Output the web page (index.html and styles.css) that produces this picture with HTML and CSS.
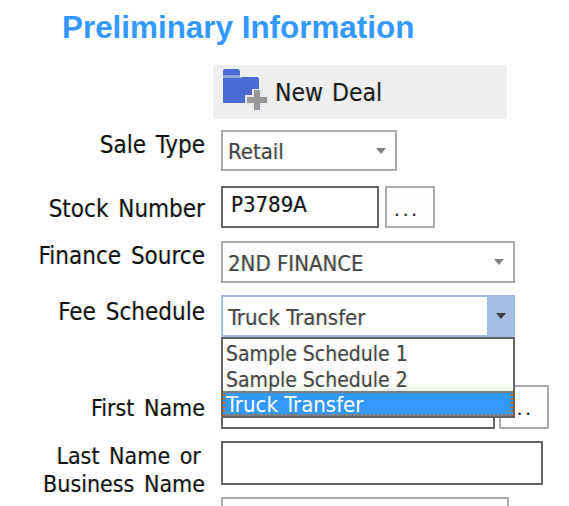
FILE: index.html
```html
<!DOCTYPE html>
<html lang="en">

<head>
    <meta charset="UTF-8">
    <title>Preliminary Information</title>
    <link rel="stylesheet" href="styles.css">
</head>

<body>
    <h1 class="title">Preliminary Information</h1>

    <div class="new-deal">
        <svg class="new-deal-icon" width="46" height="44" viewBox="0 0 46 44">
            <path d="M0 2 Q0 0 2 0 L14 0 Q17 0 17 3 L17 6 L0 6 Z" fill="#4a6bcf"/>
            <rect x="0" y="6" width="17" height="3" fill="#8ea3e0"/>
            <path d="M0 9 L17 9 L19 8 L34 8 Q36 8 36 10 L36 34 L0 34 Z" fill="#4a6bcf"/>
            <path d="M29 20 L39 20 L39 26 L46 26 L46 36 L39 36 L39 43 L29 43 L29 36 L22 36 L22 26 L29 26 Z" fill="#e6e7ec"/>
            <path d="M31 21 L37 21 L37 28 L44 28 L44 34 L37 34 L37 41 L31 41 L31 34 L24 34 L24 28 L31 28 Z" fill="#999999"/>
        </svg>
        <span>New Deal</span>
    </div>

    <div class="row row-sale">
        <label class="label">Sale Type</label>
        <div class="select select-sale">
            <span class="select-text">Retail</span>
            <span class="select-btn"><i class="arrow"></i></span>
        </div>
    </div>

    <div class="row row-stock">
        <label class="label label-low">Stock Number</label>
        <div class="input input-stock">P3789A</div>
        <div class="dots dots-stock">...</div>
    </div>

    <div class="row row-finance">
        <label class="label">Finance Source</label>
        <div class="select select-wide">
            <span class="select-text">2ND FINANCE</span>
            <span class="select-btn"><i class="arrow"></i></span>
        </div>
    </div>

    <div class="row row-fee">
        <label class="label label-fee">Fee Schedule</label>
        <div class="select select-wide select-open">
            <span class="select-text">Truck Transfer</span>
            <span class="select-btn"><i class="arrow"></i></span>
            <ul class="dropdown">
                <li>Sample Schedule 1</li>
                <li>Sample Schedule 2</li>
                <li class="current">Truck Transfer</li>
            </ul>
        </div>
    </div>

    <div class="row row-first">
        <label class="label label-low label-name">First Name</label>
        <div class="input input-first"></div>
        <div class="dots dots-first">...</div>
    </div>

    <div class="row row-last">
        <label class="label label-name">Last Name or&thinsp;<br>Business Name</label>
        <div class="input input-last"></div>
    </div>

    <div class="row row-next">
        <div class="select-cut"></div>
    </div>
</body>

</html>
```

FILE: styles.css
```css
html, body {
    height: 506px;
    overflow: hidden;
}

body {
    margin: 0;
    padding: 0;
    background: #fff;
    font-family: "DejaVu Sans", sans-serif;
    font-stretch: condensed;
    font-size: 22px;
    color: #111;
    /* colour fringe of the subpixel text in the reference */
    text-shadow: -1px 0 rgba(255, 170, 60, 0.3), 1px 0 rgba(60, 190, 255, 0.3);
}

.title {
    margin: 0;
    padding: 9px 0 0 62px;
    height: 65px;
    box-sizing: border-box;
    font-family: "Liberation Sans", Arial, sans-serif;
    font-stretch: normal;
    font-size: 31.4px;
    line-height: 38px;
    font-weight: bold;
    color: #3399ff;
    text-shadow: none;
}

.new-deal {
    display: flex;
    align-items: center;
    margin-left: 213px;
    width: 294px;
    height: 54px;
    padding-left: 10px;
    box-sizing: border-box;
    background: #efefef;
    font-size: 24.5px;
    word-spacing: 2px;
    color: #1a1a1a;
}

.new-deal-icon {
    margin: -2px 6px 0 0;
}

.row {
    display: flex;
    align-items: flex-start;
}

.row-sale { margin-top: 11px; }
.row-stock { margin-top: 15px; }
.row-finance { margin-top: 13px; }
.row-fee { margin-top: 12px; }
.row-first { margin-top: 48px; }
.row-last { margin-top: 12px; }
.row-next { margin-top: -1px; }

.label {
    width: 205px;
    margin-right: 16px;
    padding-top: 1px;
    flex-shrink: 0;
    text-align: right;
    font-size: 24px;
    line-height: 28px;
    word-spacing: 3px;
}

.label-low { padding-top: 9px; }
.label-fee { padding-top: 3px; }
.label-name { font-size: 23px; }

.select {
    position: relative;
    display: flex;
    justify-content: space-between;
    align-items: center;
    height: 42px;
    box-sizing: border-box;
    border: 2px solid #ababab;
    background: #fff;
    color: #444;
}

.select-sale { width: 176px; height: 41px; }
.select-wide { width: 294px; }

.select-text {
    padding-left: 5px;
    padding-top: 2px;
}

.select-btn {
    display: flex;
    justify-content: center;
    align-items: center;
    width: 28px;
    height: 100%;
}

.arrow {
    width: 0;
    height: 0;
    border-style: solid;
    border-width: 6px 5px 0 5px;
    border-color: #808080 transparent transparent transparent;
}

.select-open {
    border-color: #a4bde3;
}

.select-open .select-btn {
    background: #a4bde3;
    margin-right: -2px;
}

.select-open .arrow {
    border-top-color: #404040;
}

.dropdown {
    position: absolute;
    z-index: 2;
    top: 40px;
    left: -2px;
    width: 294px;
    margin: 0;
    padding: 0;
    box-sizing: border-box;
    border: 2px solid #646464;
    background: #fff;
    list-style: none;
    font-size: 21px;
}

.dropdown li {
    height: 26px;
    padding-left: 3px;
    padding-top: 2px;
    line-height: 26px;
    box-sizing: border-box;
}

.dropdown .current {
    height: 25px;
    padding-top: 0;
    line-height: 24px;
    padding-left: 1px;
    border: 2px dotted #c8640a;
    background: #3399ff;
    color: #fff;
    font-size: 22px;
    text-shadow: none;
}

.input {
    height: 42px;
    box-sizing: border-box;
    border: 2px solid #646464;
    background: #fff;
    line-height: 33px;
    padding-left: 8px;
}

.input-stock { width: 158px; }
.input-first { width: 274px; height: 44px; }
.input-last { width: 322px; height: 44px; }

.dots {
    width: 50px;
    height: 42px;
    padding-right: 6px;
    box-sizing: border-box;
    border: 2px solid #ababab;
    background: #fdfdfd;
    text-align: center;
    line-height: 42px;
    font-size: 20px;
    letter-spacing: 3px;
    color: #222;
}

.dots-stock { margin-left: 6px; }
.dots-first { margin-left: 4px; height: 44px; }

.select-cut {
    margin-left: 221px;
    width: 288px;
    height: 9px;
    box-sizing: border-box;
    border: 2px solid #ababab;
    border-bottom: none;
}
```
